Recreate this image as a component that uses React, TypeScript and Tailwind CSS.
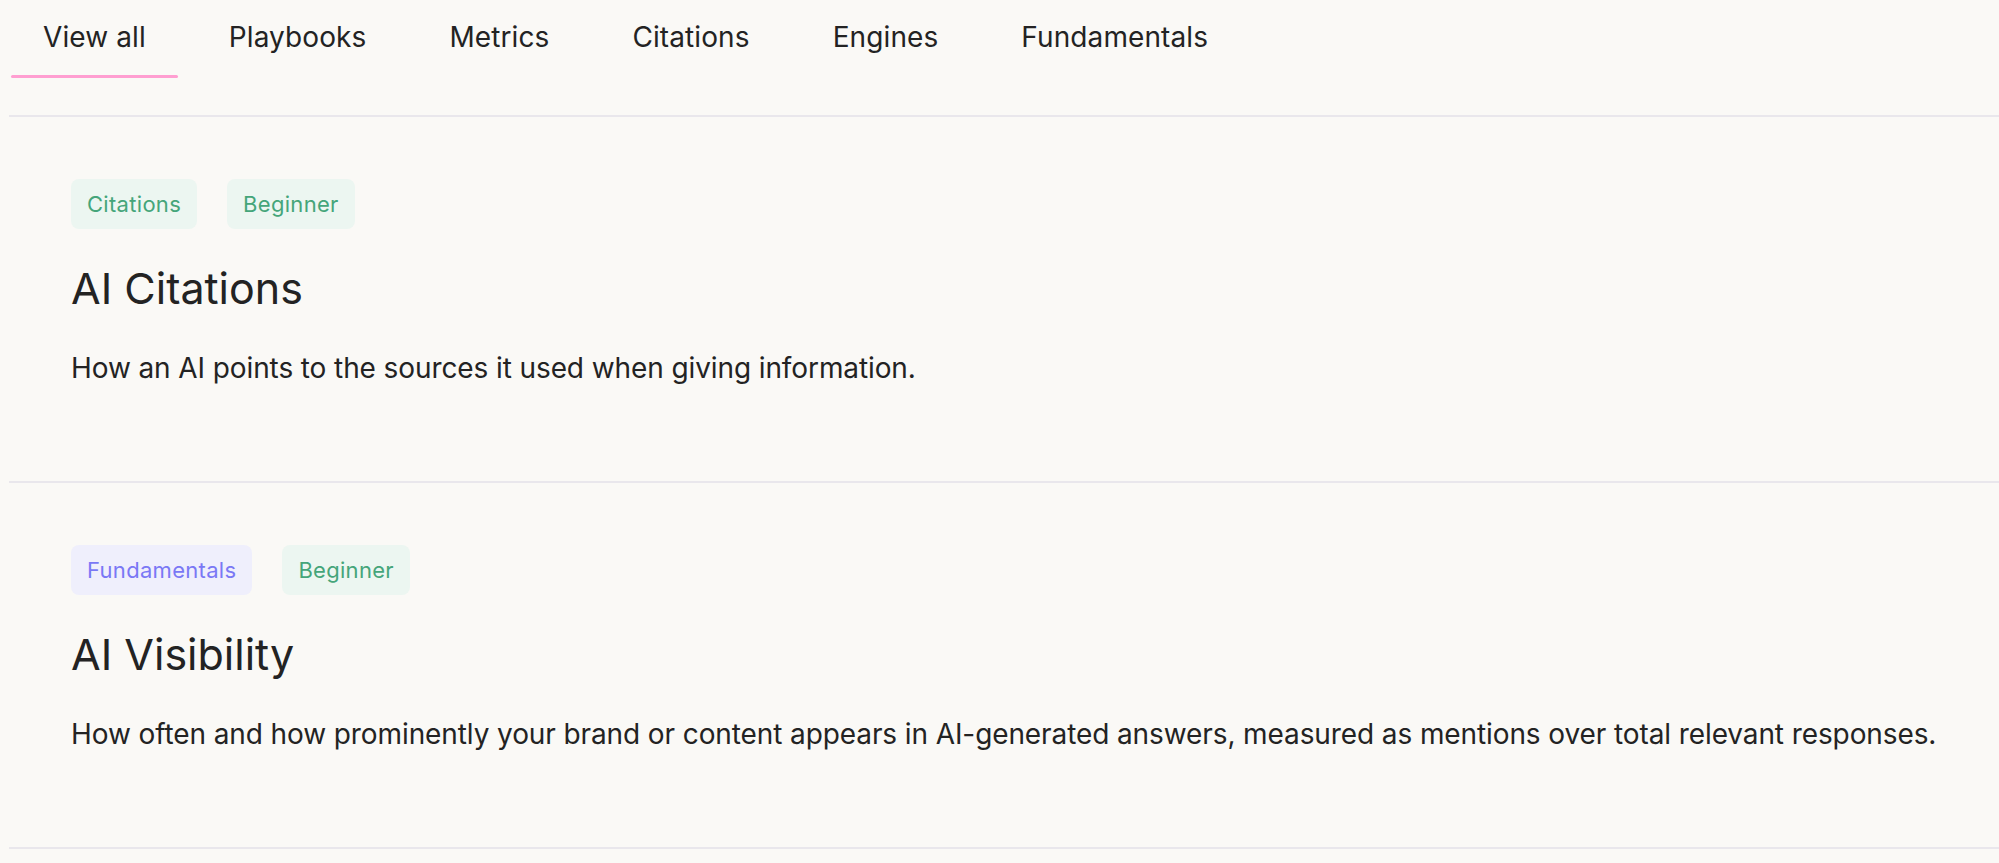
import React from "react";

const tabs = ["View all", "Playbooks", "Metrics", "Citations", "Engines", "Fundamentals"];

type Tag = { label: string; kind: "green" | "purple" };

const items: { tags: Tag[]; title: string; desc: string }[] = [
  {
    tags: [
      { label: "Citations", kind: "green" },
      { label: "Beginner", kind: "green" },
    ],
    title: "AI Citations",
    desc: "How an AI points to the sources it used when giving information.",
  },
  {
    tags: [
      { label: "Fundamentals", kind: "purple" },
      { label: "Beginner", kind: "green" },
    ],
    title: "AI Visibility",
    desc: "How often and how prominently your brand or content appears in AI-generated answers, measured as mentions over total relevant responses.",
  },
];

export default function App() {
  return (
    <div
      className="min-h-[863px] w-full bg-[#faf9f6] text-[#232323] pl-[9px]"
      style={{ fontFamily: "Inter, 'Noto Sans', sans-serif" }}
    >
      <div className="border-b-2 border-[#e9e7ec] pb-[37px]">
        <div className="flex gap-[19px] pl-[2px]">
          {tabs.map((t, i) => (
            <div key={t} className="flex flex-col">
              <div className="px-[32px] pt-[17px] pb-[18px] text-[28px] leading-[40px] whitespace-nowrap tracking-[0.1px]">
                {t}
              </div>
              <div
                className={
                  i === 0
                    ? "h-[3px] rounded-full bg-[#ff9fd1]"
                    : "h-[3px] bg-transparent"
                }
              />
            </div>
          ))}
        </div>
      </div>
      {items.map((it) => (
        <div
          key={it.title}
          className="border-b-2 border-[#e9e7ec] pl-[62px] pt-[62px] pb-[93px]"
        >
          <div className="flex gap-[30px]">
            {it.tags.map((tg) => (
              <span
                key={tg.label}
                className={
                  tg.kind === "green"
                    ? "flex h-[50px] items-center rounded-[8px] bg-[#ecf6f1] px-[16px] text-[22px] tracking-[0.3px] text-[#45a57a]"
                    : "flex h-[50px] items-center rounded-[8px] bg-[#efeffc] px-[16px] text-[22px] tracking-[0.3px] text-[#7a78f5]"
                }
              >
                {tg.label}
              </span>
            ))}
          </div>
          <h2 className="mt-[33px] text-[43px] leading-[52px] font-normal">{it.title}</h2>
          <p className="mt-[34px] text-[28px] leading-[40px] tracking-[-0.1px]">{it.desc}</p>
        </div>
      ))}
    </div>
  );
}
